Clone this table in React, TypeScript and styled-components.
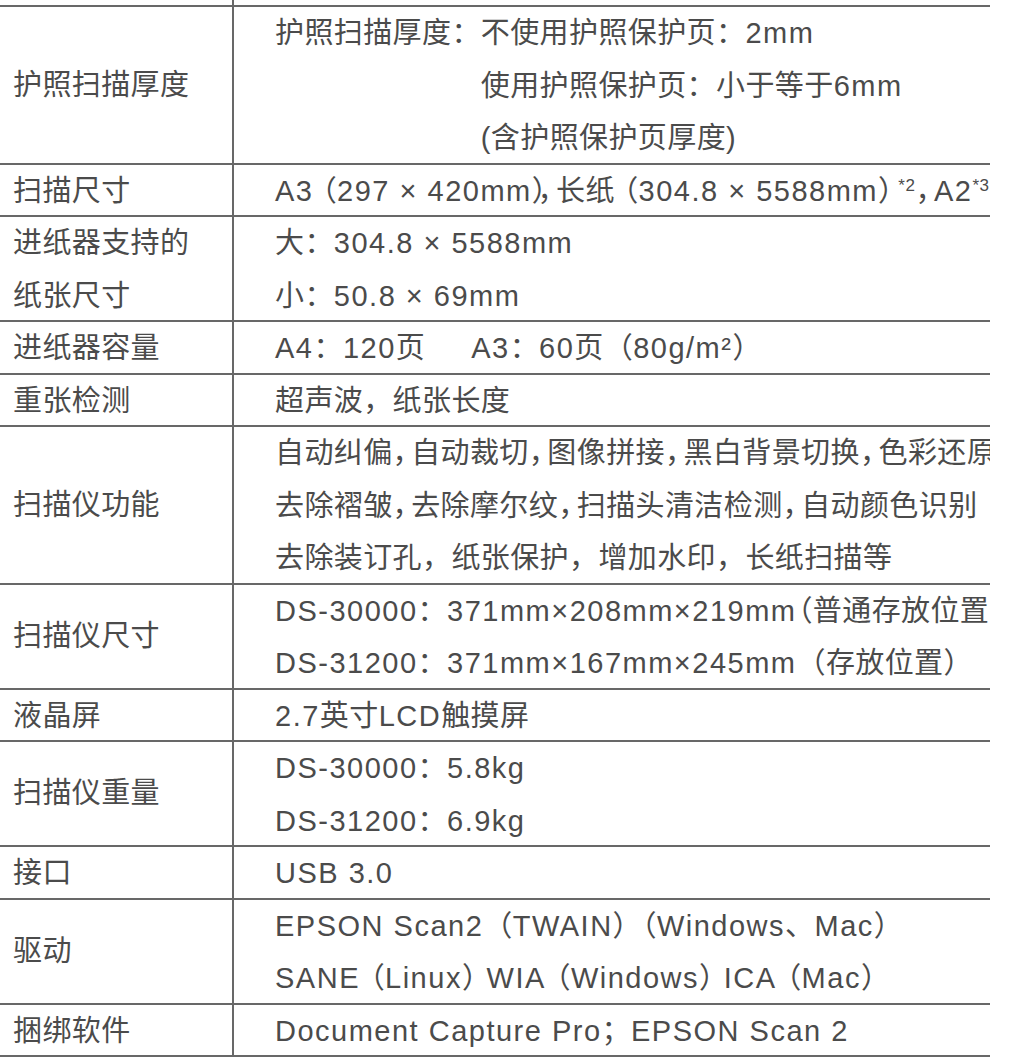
import styled, { createGlobalStyle } from 'styled-components';

const GlobalStyle = createGlobalStyle`
    body {
        margin: 0;
        background: #ffffff;
        font-family: 'Liberation Sans', 'Noto Sans CJK SC', sans-serif;
    }
`;

const LINE = 52.5;

const Table = styled.div`
    width: 990px;
    color: #4b4b4b;
    font-size: 29px;
    letter-spacing: 0.4px;
    border-bottom: 2px solid #686868;
`;

const Row = styled.div<{ $lines: number; $stub?: boolean }>`
    display: grid;
    grid-template-columns: 234px 1fr;
    box-sizing: border-box;
    height: ${(p) => (p.$stub ? '5px' : `${p.$lines * LINE}px`)};
    border-top: ${(p) => (p.$stub ? 'none' : '2px solid #686868')};
`;

const Label = styled.div`
    display: flex;
    flex-direction: column;
    justify-content: center;
    padding-left: 13px;
    border-right: 2px solid #686868;
    line-height: ${LINE}px;
    white-space: nowrap;
`;

const Value = styled.div`
    padding-left: 41px;
    overflow: hidden;
    white-space: nowrap;
    line-height: ${LINE}px;
`;

const Line = styled.div`
    height: ${LINE}px;
`;

const Split = styled.div`
    display: flex;
`;

const Stack = styled.div`
    display: flex;
    flex-direction: column;
`;

// latin runs are set a little wider than the CJK text
const Lat = styled.span`
    letter-spacing: 1.5px;
`;

// narrowed full-width punctuation: commas / closing brackets lose space on the right
const Tight = styled.span<{ $cut?: number }>`
    letter-spacing: ${(p) => `-${p.$cut ?? 0.36}em`};
`;

// opening brackets lose space on the left
const Open = styled.span<{ $cut?: number }>`
    margin-left: ${(p) => `-${p.$cut ?? 0.3}em`};
`;

const Sup = styled.sup`
    font-size: 17px;
    vertical-align: 10px;
    line-height: 0;
    letter-spacing: 0.5px;
`;

const Gap = styled.span`
    display: inline-block;
    width: 46px;
`;

const t = (s: string) =>
    s.split(/([A-Za-z0-9.\-×²/ ]+)/).map((part, i) =>
        i % 2 ? <Lat key={i}>{part}</Lat> : part
    );

type Spec = { label: string[]; lines: number; value: React.ReactNode };

const rows: Spec[] = [
    {
        label: ['护照扫描厚度'],
        lines: 3,
        value: (
            <Split>
                <span>护照扫描厚度：</span>
                <Stack>
                    <Line>{t('不使用护照保护页：2mm')}</Line>
                    <Line>{t('使用护照保护页：小于等于6mm')}</Line>
                    <Line>(含护照保护页厚度)</Line>
                </Stack>
            </Split>
        ),
    },
    {
        label: ['扫描尺寸'],
        lines: 1,
        value: (
            <Line>
                {t('A3')}
                <Open $cut={0.2}>（</Open>
                {t('297 × 420mm')}
                <Tight $cut={0.3}>）</Tight>
                <Tight>，</Tight>长纸<Open $cut={0.2}>（</Open>
                {t('304.8 × 5588mm')}
                <Tight $cut={0.3}>）</Tight>
                <Sup>*2</Sup>
                <Tight>，</Tight>
                {t('A2')}
                <Sup>*3</Sup>
            </Line>
        ),
    },
    {
        label: ['进纸器支持的', '纸张尺寸'],
        lines: 2,
        value: (
            <>
                <Line>{t('大：304.8 × 5588mm')}</Line>
                <Line>{t('小：50.8 × 69mm')}</Line>
            </>
        ),
    },
    {
        label: ['进纸器容量'],
        lines: 1,
        value: (
            <Line>
                {t('A4：120页')}
                <Gap />
                {t('A3：60页（80g/m²）')}
            </Line>
        ),
    },
    {
        label: ['重张检测'],
        lines: 1,
        value: <Line>超声波，纸张长度</Line>,
    },
    {
        label: ['扫描仪功能'],
        lines: 3,
        value: (
            <>
                <Line>
                    自动纠偏<Tight>，</Tight>自动裁切<Tight>，</Tight>图像拼接<Tight>，</Tight>黑白背景切换
                    <Tight>，</Tight>色彩还原<Tight>，</Tight>
                </Line>
                <Line>
                    去除褶皱<Tight>，</Tight>去除摩尔纹<Tight>，</Tight>扫描头清洁检测<Tight>，</Tight>自动颜色识别
                </Line>
                <Line>去除装订孔，纸张保护，增加水印，长纸扫描等</Line>
            </>
        ),
    },
    {
        label: ['扫描仪尺寸'],
        lines: 2,
        value: (
            <>
                <Line>
                    {t('DS-30000：371mm×208mm×219mm')}
                    <Open $cut={0.45}>（</Open>普通存放位置
                </Line>
                <Line>{t('DS-31200：371mm×167mm×245mm（存放位置）')}</Line>
            </>
        ),
    },
    {
        label: ['液晶屏'],
        lines: 1,
        value: <Line>{t('2.7英寸LCD触摸屏')}</Line>,
    },
    {
        label: ['扫描仪重量'],
        lines: 2,
        value: (
            <>
                <Line>{t('DS-30000：5.8kg')}</Line>
                <Line>{t('DS-31200：6.9kg')}</Line>
            </>
        ),
    },
    {
        label: ['接口'],
        lines: 1,
        value: <Line>{t('USB 3.0')}</Line>,
    },
    {
        label: ['驱动'],
        lines: 2,
        value: (
            <>
                <Line>{t('EPSON Scan2（TWAIN）（Windows、Mac）')}</Line>
                <Line>
                    {t('SANE')}
                    <Open $cut={0.15}>（</Open>
                    {t('Linux')}
                    <Tight $cut={0.15}>）</Tight>
                    {t('WIA')}
                    <Open $cut={0.15}>（</Open>
                    {t('Windows')}
                    <Tight $cut={0.15}>）</Tight>
                    {t('ICA')}
                    <Open $cut={0.15}>（</Open>
                    {t('Mac')}
                    <Tight $cut={0.15}>）</Tight>
                </Line>
            </>
        ),
    },
    {
        label: ['捆绑软件'],
        lines: 1,
        value: <Line>{t('Document Capture Pro；EPSON Scan 2')}</Line>,
    },
];

export default function App() {
    return (
        <>
            <GlobalStyle />
            <Table>
                <Row $lines={0} $stub>
                    <Label />
                    <Value />
                </Row>
                {rows.map((r) => (
                    <Row key={r.label.join('')} $lines={r.lines}>
                        <Label>
                            {r.label.map((l) => (
                                <div key={l}>{l}</div>
                            ))}
                        </Label>
                        <Value>{r.value}</Value>
                    </Row>
                ))}
            </Table>
        </>
    );
}
